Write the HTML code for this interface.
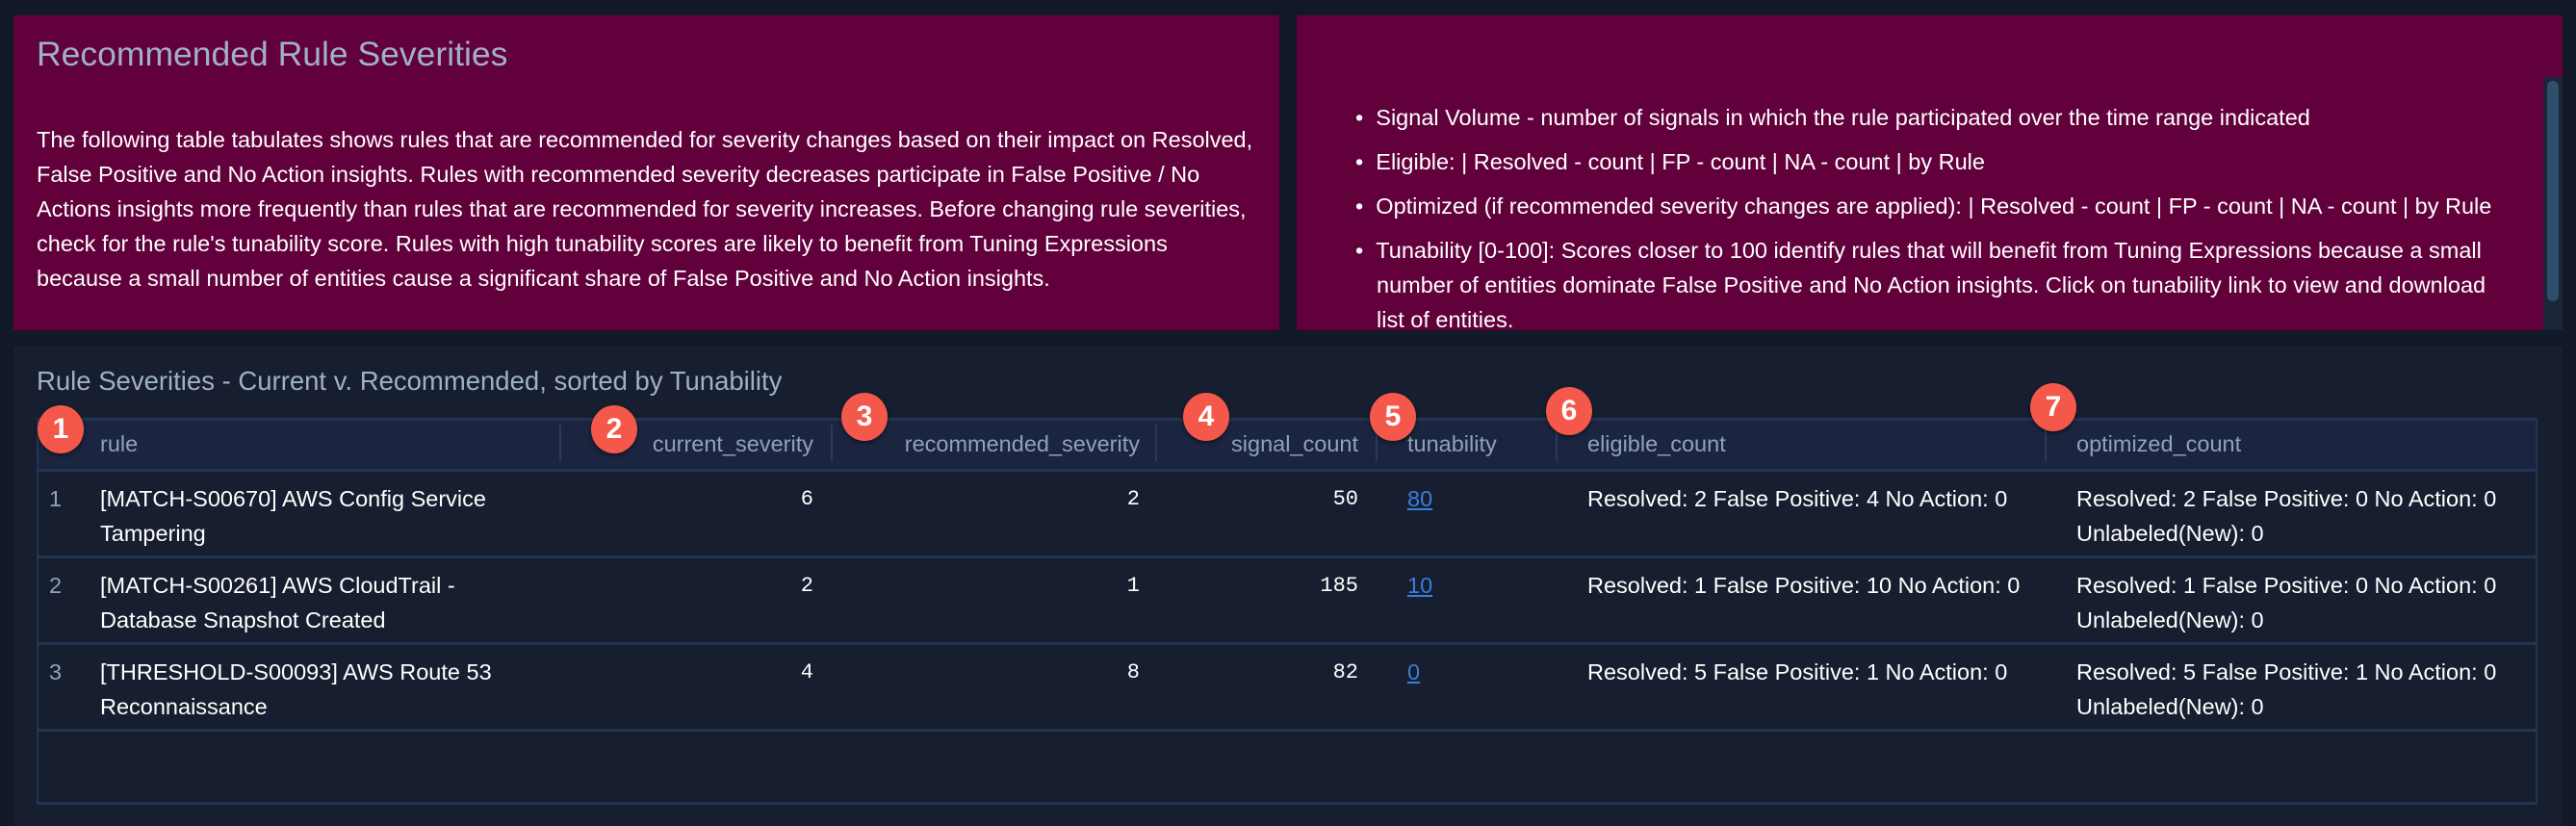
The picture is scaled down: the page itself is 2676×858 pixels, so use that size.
<!DOCTYPE html>
<html><head><meta charset="utf-8"><style>
*{margin:0;padding:0;box-sizing:border-box}
body{width:2676px;height:858px;background:#111827;font-family:"Liberation Sans",sans-serif;position:relative;overflow:hidden}
.a{position:absolute;white-space:nowrap}
.p{position:absolute;background:#62003c}
.t{color:#fff;font-size:23.5px}
.h{color:#8ea3b8;font-size:23.5px}
.m{font-family:"Liberation Mono",monospace;font-size:22px;color:#fff}
.b{position:absolute;width:48px;height:50px;border-radius:50%;background:#f4584a;color:#fff;font-size:30px;font-weight:bold;text-align:center;line-height:50px;box-shadow:0 2px 4px rgba(0,0,0,.5)}
.sep{position:absolute;top:441px;width:2px;height:38px;background:#2a3a58}
.rl{position:absolute;left:38px;width:2598px;height:3px;background:#233453}
.lnk{color:#3b7ddd;text-decoration:underline;font-size:23.5px}
</style></head><body>
<div class="p" style="left:14px;top:16px;width:1315px;height:327px"></div>
<div class="a" style="left:38px;top:36px;font-size:35.5px;color:#9fb1c5">Recommended Rule Severities</div>
<div class="a t" style="left:38px;top:127px;line-height:36px">The following table tabulates shows rules that are recommended for severity changes based on their impact on Resolved,<br>False Positive and No Action insights. Rules with recommended severity decreases participate in False Positive / No<br>Actions insights more frequently than rules that are recommended for severity increases. Before changing rule severities,<br>check for the rule's tunability score. Rules with high tunability scores are likely to benefit from Tuning Expressions<br>because a small number of entities cause a significant share of False Positive and No Action insights.</div>

<div class="p" style="left:1347px;top:16px;width:1315px;height:327px"></div>
<div class="a" style="left:2642px;top:80px;width:20px;height:263px;background:#1b2538"></div>
<div class="a" style="left:2646px;top:84px;width:12px;height:229px;background:#2f4f6d;border-radius:6px"></div>
<div class="a t" style="left:1408px;top:104px;line-height:36px;height:239px;overflow:hidden">
<div>•&nbsp;&nbsp;Signal Volume - number of signals in which the rule participated over the time range indicated</div>
<div style="margin-top:10px">•&nbsp;&nbsp;Eligible: | Resolved - count | FP - count | NA - count | by Rule</div>
<div style="margin-top:10px">•&nbsp;&nbsp;Optimized (if recommended severity changes are applied): | Resolved - count | FP - count | NA - count | by Rule</div>
<div style="margin-top:10px">•&nbsp;&nbsp;Tunability [0-100]: Scores closer to 100 identify rules that will benefit from Tuning Expressions because a small</div>
<div style="padding-left:22px">number of entities dominate False Positive and No Action insights. Click on tunability link to view and download</div>
<div style="padding-left:22px">list of entities.</div>
</div>

<div class="a" style="left:14px;top:360px;width:2648px;height:498px;background:#161e2f"></div>
<div class="a" style="left:38px;top:380px;font-size:27.5px;color:#9fb1c5">Rule Severities - Current v. Recommended, sorted by Tunability</div>
<div class="a" style="left:38px;top:434px;width:2598px;height:401px;border:2px solid #233453;border-top:3px solid #233453"></div>
<div class="a" style="left:40px;top:437px;width:2594px;height:51px;background:#1b2540"></div>
<div class="rl" style="top:487px"></div>
<div class="rl" style="top:577px"></div>
<div class="rl" style="top:667px"></div>
<div class="rl" style="top:757px"></div>
<div class="rl" style="top:833px"></div>
<div class="sep" style="left:581px"></div>
<div class="sep" style="left:863px"></div>
<div class="sep" style="left:1200px"></div>
<div class="sep" style="left:1429px"></div>
<div class="sep" style="left:1616px"></div>
<div class="sep" style="left:2124px"></div>

<div class="a h" style="left:104px;top:448px">rule</div>
<div class="a h" style="right:1831px;top:448px">current_severity</div>
<div class="a h" style="right:1492px;top:448px">recommended_severity</div>
<div class="a h" style="right:1265px;top:448px">signal_count</div>
<div class="a h" style="left:1462px;top:448px">tunability</div>
<div class="a h" style="left:1649px;top:448px">eligible_count</div>
<div class="a h" style="left:2157px;top:448px">optimized_count</div>

<div class="a t" style="left:51px;top:500px;line-height:36px;color:#8ea3b8">1</div>
<div class="a t" style="left:104px;top:500px;line-height:36px">[MATCH-S00670] AWS Config Service<br>Tampering</div>
<div class="a m" style="right:1831px;top:506px">6</div>
<div class="a m" style="right:1492px;top:506px">2</div>
<div class="a m" style="right:1265px;top:506px">50</div>
<div class="a lnk" style="left:1462px;top:500px;line-height:36px">80</div>
<div class="a t" style="left:1649px;top:500px;line-height:36px">Resolved: 2 False Positive: 4 No Action: 0</div>
<div class="a t" style="left:2157px;top:500px;line-height:36px">Resolved: 2 False Positive: 0 No Action: 0<br>Unlabeled(New): 0</div>

<div class="a t" style="left:51px;top:590px;line-height:36px;color:#8ea3b8">2</div>
<div class="a t" style="left:104px;top:590px;line-height:36px">[MATCH-S00261] AWS CloudTrail -<br>Database Snapshot Created</div>
<div class="a m" style="right:1831px;top:596px">2</div>
<div class="a m" style="right:1492px;top:596px">1</div>
<div class="a m" style="right:1265px;top:596px">185</div>
<div class="a lnk" style="left:1462px;top:590px;line-height:36px">10</div>
<div class="a t" style="left:1649px;top:590px;line-height:36px">Resolved: 1 False Positive: 10 No Action: 0</div>
<div class="a t" style="left:2157px;top:590px;line-height:36px">Resolved: 1 False Positive: 0 No Action: 0<br>Unlabeled(New): 0</div>

<div class="a t" style="left:51px;top:680px;line-height:36px;color:#8ea3b8">3</div>
<div class="a t" style="left:104px;top:680px;line-height:36px">[THRESHOLD-S00093] AWS Route 53<br>Reconnaissance</div>
<div class="a m" style="right:1831px;top:686px">4</div>
<div class="a m" style="right:1492px;top:686px">8</div>
<div class="a m" style="right:1265px;top:686px">82</div>
<div class="a lnk" style="left:1462px;top:680px;line-height:36px">0</div>
<div class="a t" style="left:1649px;top:680px;line-height:36px">Resolved: 5 False Positive: 1 No Action: 0</div>
<div class="a t" style="left:2157px;top:680px;line-height:36px">Resolved: 5 False Positive: 1 No Action: 0<br>Unlabeled(New): 0</div>

<div class="b" style="left:39px;top:421px">1</div>
<div class="b" style="left:614px;top:421px">2</div>
<div class="b" style="left:874px;top:408px">3</div>
<div class="b" style="left:1229px;top:408px">4</div>
<div class="b" style="left:1423px;top:408px">5</div>
<div class="b" style="left:1606px;top:402px">6</div>
<div class="b" style="left:2109px;top:398px">7</div>
</body></html>
